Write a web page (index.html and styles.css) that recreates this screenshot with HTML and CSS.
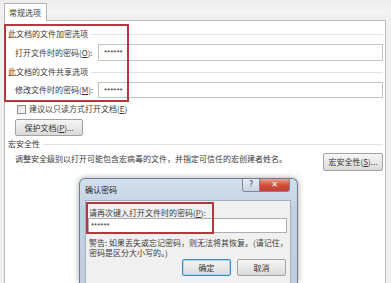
FILE: index.html
```html
<!DOCTYPE html>
<html lang="zh-CN">
<head>
    <meta charset="UTF-8">
    <title>常规选项</title>
    <link rel="stylesheet" href="styles.css">
</head>
<body>
    <div id="screen">
        <div class="tabbar">
            <div class="tab">常规选项</div>
        </div>
        <div class="panel">
            <div class="head"><span>此文档的文件加密选项</span><i></i></div>
            <div class="row">
                <label>打开文件时的密码(<u>O</u>):</label>
                <div class="input">******</div>
            </div>
            <div class="head head2"><span>此文档的文件共享选项</span><i></i></div>
            <div class="row">
                <label>修改文件时的密码(<u>M</u>):</label>
                <div class="input">******</div>
            </div>
            <div class="check">
                <span class="box"></span>
                <span>建议以只读方式打开文档(<u>E</u>)</span>
            </div>
            <div class="btnrow">
                <span class="btn protect">保护文档(<u>P</u>)...</span>
            </div>
            <div class="head head3"><span>宏安全性</span><i></i></div>
            <div class="desc">
                <span>调整安全级别以打开可能包含宏病毒的文件，并指定可信任的宏创建者姓名。</span>
                <span class="btn macro">宏安全性(<u>S</u>)...</span>
            </div>
        </div>
        <!-- 标注框 -->
        <div class="mark mark-main"></div>

        <div class="dialog">
            <div class="title">
                <span class="caption">确认密码</span>
                <span class="ctl help">?</span>
                <span class="ctl close">✕</span>
            </div>
            <div class="client">
                <div class="mark mark-dlg"></div>
                <p class="dlabel">请再次键入打开文件时的密码(<u>P</u>):</p>
                <div class="input dinput">******</div>
                <p class="warn">警告: 如果丢失或忘记密码，则无法将其恢复。(请记住，<br>密码是区分大小写的。)</p>
                <div class="actions">
                    <span class="btn ok">确定</span>
                    <span class="btn">取消</span>
                </div>
            </div>
        </div>
    </div>
</body>
</html>
```

FILE: styles.css
```css
body,p{ margin: 0;}
body{
    width: 391px;
    height: 283px;
    overflow: hidden;
    background-color: #f0f0f0;
    font-family: "Noto Sans CJK SC", "Liberation Sans", sans-serif;
    font-size: 8px;
    line-height: 12px;
    color: #3a3a3a;
}
u{
    text-decoration: underline;
}
#screen{
    position: relative;
    height: 283px;
    overflow: hidden;
}
.tabbar{
    height: 20px;
    box-sizing: border-box;
    padding: 3px 0 0 4px;
    background: linear-gradient(#ececec, #f3f3f3 60%, #ededed);
}
.tab{
    position: relative;
    z-index: 1;
    width: 43px;
    height: 18px;
    box-sizing: border-box;
    padding-left: 4px;
    line-height: 18px;
    border: 1px solid #b4b4b4;
    border-bottom: none;
    background-color: #fff;
}
.panel{
    width: 382px;
    height: 263px;
    margin-left: 4px;
    box-sizing: border-box;
    padding: 0 2px;
    border: 1px solid #bdbdbd;
    border-bottom: none;
    background-color: #fff;
}
.head{
    display: flex;
    align-items: center;
    gap: 3px;
    height: 12px;
    margin-top: 7px;
    padding-left: 1px;
}
.head i{
    flex: 1;
    border-top: 1px solid #e2e2e2;
}
.head2{
    margin-top: 5px;
}
.head3{
    margin-top: 2px;
}
.row{
    display: flex;
    align-items: center;
    margin-top: 4px;
    padding-left: 8px;
}
.row label{
    width: 83px;
}
.input{
    flex: 1;
    height: 16px;
    box-sizing: border-box;
    padding-left: 5px;
    border: 1px solid #c4c4c4;
    line-height: 15px;
    font-family: "Liberation Sans", sans-serif;
    font-size: 8px;
    background-color: #fff;
}
.row:nth-of-type(2) .input{
    height: 17px;
}
.check{
    display: flex;
    align-items: center;
    gap: 3px;
    height: 12px;
    margin-top: 5px;
    padding-left: 10px;
}
.check .box{
    width: 9px;
    height: 9px;
    box-sizing: border-box;
    border: 1px solid #8e8e8e;
    background: linear-gradient(135deg, #dcdcdc, #fafafa);
}
.btnrow{
    margin-top: 4px;
    padding-left: 8px;
}
.btn{
    display: inline-block;
    height: 17px;
    box-sizing: border-box;
    line-height: 15px;
    text-align: center;
    border: 1px solid #a3a3a3;
    border-radius: 2px;
    background: linear-gradient(#f6f6f6, #e8e8e8 50%, #dadada);
    color: #333;
}
.protect{
    width: 68px;
}
.desc{
    display: flex;
    justify-content: space-between;
    align-items: flex-start;
    margin-top: 3px;
    padding-left: 8px;
}
.macro{
    width: 60px;
    height: 18px;
    line-height: 16px;
}
.mark{
    position: absolute;
    box-sizing: border-box;
    border: 2px solid #b23a3e;
}
.mark-main{
    left: 4px;
    top: 24px;
    width: 125px;
    height: 78px;
    z-index: 2;
}
.dialog{
    position: absolute;
    left: 79px;
    top: 178px;
    width: 219px;
    height: 105px;
    box-sizing: border-box;
    overflow: hidden;
    border: 1px solid #6d7d90;
    border-bottom: none;
    border-radius: 6px 6px 0 0;
    background: linear-gradient(#d3dfec, #c2d1e2 30%, #bfcfe0);
    box-shadow: 0 0 6px rgba(0,0,0,.35);
}
.title{
    display: flex;
    align-items: flex-start;
    height: 21px;
    padding: 0 7px 0 5px;
}
.caption{
    flex: 1;
    line-height: 21px;
    color: #222;
}
.ctl{
    height: 13px;
    box-sizing: border-box;
    line-height: 12px;
    text-align: center;
    font-family: "DejaVu Sans", sans-serif;
    font-size: 8px;
    border: 1px solid #7b8796;
    border-top: none;
}
.help{
    width: 18px;
    border-radius: 0 0 0 3px;
    background: linear-gradient(#e4ebf3, #c9d4e1);
    color: #3a4656;
}
.close{
    width: 30px;
    border-left: none;
    border-radius: 0 0 3px 0;
    background: linear-gradient(#e8a393, #d2503a 50%, #c2402c);
    color: #fff;
    font-weight: bold;
}
.client{
    position: relative;
    height: 83px;
    margin: 0 6px 0 5px;
    box-sizing: border-box;
    padding: 6px 3px 0 2px;
    background-color: #f0f0f0;
    border: 1px solid #9fb0c3;
    border-bottom: none;
}
.mark-dlg{
    left: 0;
    top: 1px;
    width: 128px;
    height: 32px;
}
.dlabel{
    padding-left: 1px;
    line-height: 11px;
}
.dinput{
    height: 15px;
    line-height: 13px;
    padding-left: 2px;
    border-color: #abadb3;
}
.warn{
    margin-top: 5px;
    padding-left: 1px;
    line-height: 10px;
    white-space: nowrap;
}
.actions{
    display: flex;
    justify-content: flex-end;
    gap: 6px;
    margin-top: 1px;
    padding-right: 1px;
}
.actions .btn{
    width: 49px;
}
.actions .ok{
    border-color: #3c8bc6;
    box-shadow: inset 0 0 0 1px #a6d8f3;
}
```
